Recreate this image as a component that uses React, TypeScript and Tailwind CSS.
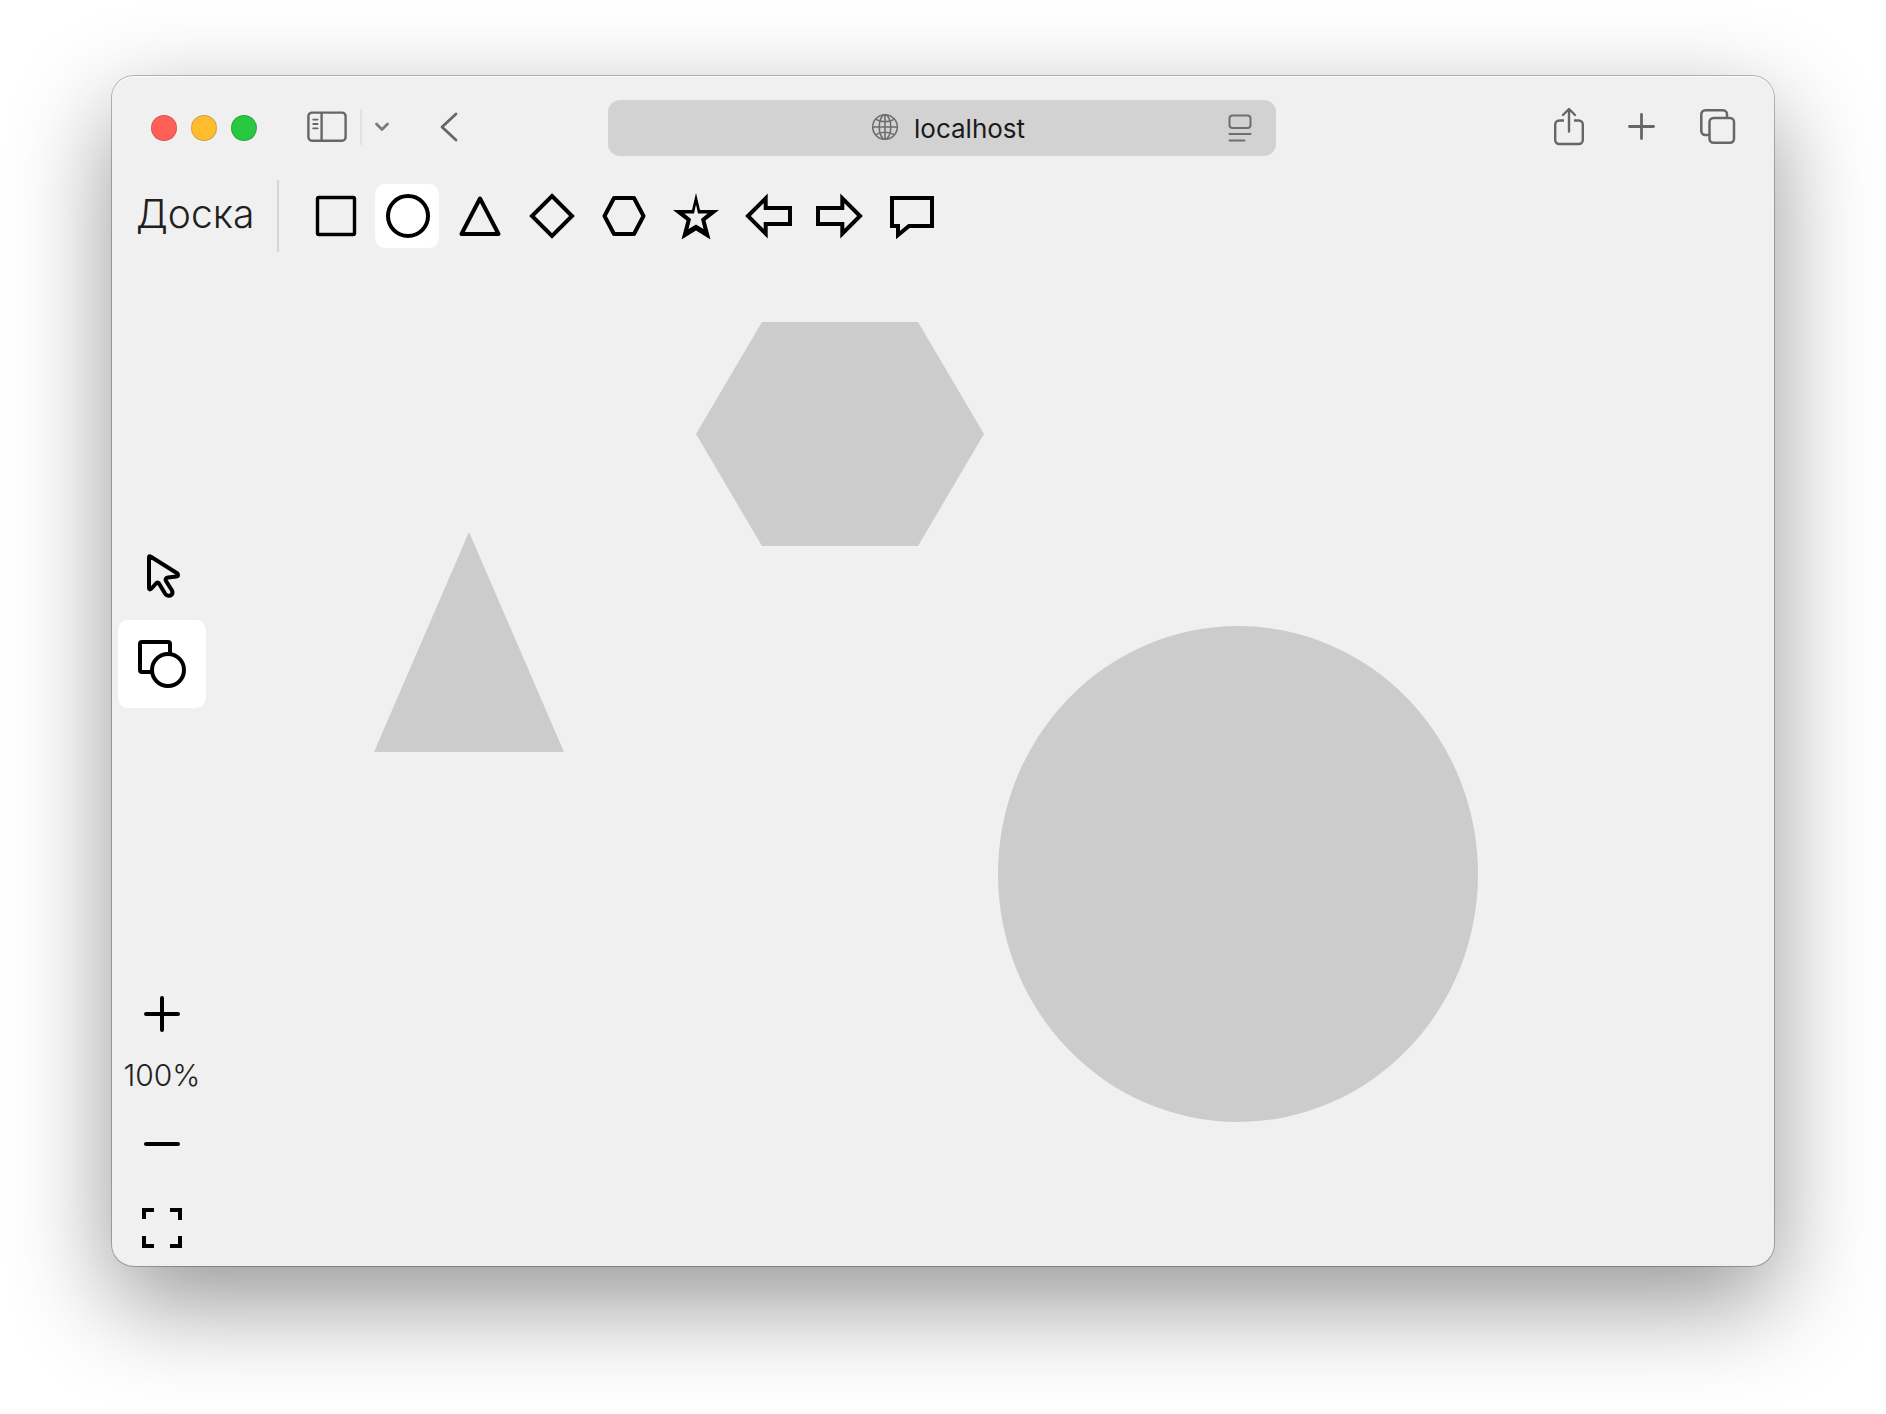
import type { ReactNode } from "react";

const shapeTools: { name: string; icon: ReactNode }[] = [
  { name: "Квадрат", icon: <rect x="14.5" y="13.5" width="37" height="37" rx="1.5" strokeWidth="3.4" /> },
  { name: "Круг", icon: <circle cx="33" cy="32" r="20" /> },
  { name: "Треугольник", icon: <path d="M33 14.5 51.5 50h-37Z" strokeLinejoin="round" /> },
  { name: "Ромб", icon: <path d="M33 12 53 32 33 52 13 32Z" /> },
  { name: "Шестиугольник", icon: <path d="M13.5 32 23 14h20L52.5 32 43 50H23Z" strokeLinejoin="round" /> },
  {
    name: "Звезда",
    icon: (
      <path
        stroke="none"
        fill="#000"
        fillRule="evenodd"
        d="M33 9 37 26H56L42.500 36.500 47.500 55.500 33 46.500 18.500 55.500 23.500 36.500 10 26H29ZM33 20.500 31 29.500H21.500L28 35 25.500 45 33 40.500 40.500 45 38 35 44.500 29.500H35Z"
      />
    ),
  },
  { name: "Стрелка влево", icon: <path d="M13 32 30.7 14.3V24H55v16H30.7v9.7Z" /> },
  { name: "Стрелка вправо", icon: <path d="M53 32 35.3 14.3V24H11v16h24.3v9.7Z" /> },
  { name: "Выноска", icon: <path d="M13 14h40v28H30L19 51v-9h-6Z" /> },
];

function BrowserBar() {
  return (
    <header className="grid h-[102px] grid-cols-[1fr_670px_1fr] items-center text-[#666]">
      <div className="flex items-center pl-10">
        <div className="flex gap-4 pt-0.5">
          <button aria-label="Закрыть" className="size-6 rounded-full bg-[#ff5f57] ring-1 ring-[#d8574f]" />
          <button aria-label="Свернуть" className="size-6 rounded-full bg-[#febc2e] ring-1 ring-[#d3a13a]" />
          <button aria-label="Развернуть" className="size-6 rounded-full bg-[#28c840] ring-1 ring-[#2ba33c]" />
        </div>
        <button aria-label="Боковая панель" className="ml-[51px]">
          <svg className="h-8 w-10" viewBox="0 0 40 32" fill="none" stroke="currentColor" strokeWidth="2.4" strokeLinecap="round">
            <rect x="1.4" y="1.6" width="37.2" height="28.2" rx="3.6" />
            <path d="M14.6 2v27.6" />
            <path d="M6.2 8.6h4.4M6.2 13h4.4M6.2 17.4h4.4" strokeWidth="1.8" />
          </svg>
        </button>
        <div className="ml-[13px] h-9 w-0.5 bg-[#e1e1e1]" />
        <button aria-label="Группы вкладок" className="ml-3">
          <svg className="h-3 w-4" viewBox="0 0 16 12" fill="none" stroke="#7b7b7b" strokeWidth="2.8" strokeLinecap="round" strokeLinejoin="round">
            <path d="m2.500 3 5.500 5.500L13.500 3" />
          </svg>
        </button>
        <button aria-label="Назад" className="ml-[50px]">
          <svg className="h-8 w-5" viewBox="0 0 20 32" fill="none" stroke="currentColor" strokeWidth="2.8" strokeLinecap="round" strokeLinejoin="round">
            <path d="M16 3 2 16l14 13" />
          </svg>
        </button>
      </div>

      <div className="mt-0.5 mr-0.5 flex h-14 items-center rounded-xl bg-[#d2d2d2] pr-6 pl-[263px] text-[#1a1a1a]">
        <svg className="size-[28px] shrink-0 text-[#6e6e6e]" viewBox="0 0 28 28" fill="none" stroke="currentColor" strokeWidth="1.6">
          <circle cx="14" cy="13" r="12.3" />
          <ellipse cx="14" cy="13" rx="5.8" ry="12.3" />
          <path d="M14 .7v24.6M1.7 13h24.6M4.5 5.2c5 3.4 14 3.400 19 0M4.5 20.8c5-3.4 14-3.400 19 0" />
        </svg>
        <input
          aria-label="Адрес"
          defaultValue="localhost"
          className="mt-0.5 ml-[15px] min-w-0 flex-1 bg-transparent font-[Inter,sans-serif] text-[26px] leading-8 outline-none"
        />
        <button aria-label="Режим чтения" className="text-[#6e6e6e]">
          <svg className="h-7 w-6" viewBox="0 0 24 28" fill="none" stroke="currentColor" strokeWidth="2" strokeLinecap="round">
            <rect x="1.5" y="1.5" width="21" height="12.5" rx="3" />
            <path d="M1.5 20h21M1.5 26.5h15" />
          </svg>
        </button>
      </div>

      <div className="flex items-center justify-end gap-11 pr-[38px]">
        <button aria-label="Поделиться">
          <svg className="h-10 w-[30px]" viewBox="0 0 30 40" fill="none" stroke="currentColor" strokeWidth="2.4" strokeLinecap="round" strokeLinejoin="round">
            <path d="M10 13.500H5.200A4 4 0 0 0 1.200 17.500V33a4 4 0 0 0 4 4h19.600a4 4 0 0 0 4-4V17.500a4 4 0 0 0-4-4H20" strokeLinecap="butt" />
            <path d="M15 24.500V2.500M9 8l6-6 6 6" />
          </svg>
        </button>
        <button aria-label="Новая вкладка">
          <svg className="size-[28px]" viewBox="0 0 28 28" fill="none" stroke="currentColor" strokeWidth="2.8" strokeLinecap="round">
            <path d="M13.5 1.5v24M1.5 13.5h24" />
          </svg>
        </button>
        <button aria-label="Обзор вкладок">
          <svg className="size-9" viewBox="0 0 36 36" fill="none" stroke="currentColor" strokeWidth="2.5">
            <path d="M27 9V5.300a4 4 0 0 0-4-4H5.300a4 4 0 0 0-4 4V22a4 4 0 0 0 4 4H9.500" />
            <rect x="9.5" y="9" width="24.5" height="24.8" rx="4" />
          </svg>
        </button>
      </div>
    </header>
  );
}

function Toolbar() {
  return (
    <div className="flex h-[76px] shrink-0 items-center">
      <h1 className="w-[165px] pb-1 pl-6 font-[Inter,sans-serif] text-[39px] leading-[72px] font-light text-[#1f1f1f]">Доска</h1>
      <div className="h-[72px] w-0.5 bg-[#d6d6d6]" />
      <div className="flex gap-2 pl-6">
        {shapeTools.map((tool, i) => (
          <button key={tool.name} aria-label={tool.name} className={i === 1 ? "size-16 rounded-[10px] bg-white" : "size-16 rounded-[10px]"}>
            <svg className="size-16" viewBox="0 0 64 64" fill="none" stroke="#000" strokeWidth="4" strokeMiterlimit="10">
              {tool.icon}
            </svg>
          </button>
        ))}
      </div>
    </div>
  );
}

function Sidebar() {
  return (
    <aside className="flex w-[94px] flex-col items-center pl-1.5">
      <div className="flex flex-1 flex-col justify-end pb-[266px]">
        <button aria-label="Выделение" className="size-[88px]">
          <svg className="size-[88px]" viewBox="0 0 88 88" fill="none" stroke="#000" strokeWidth="4" strokeLinejoin="round">
            <path d="M32.500 24.500 59.500 41.500Q61 44 58.500 44.500L50 45.500Q46.500 46 48 49L54 58.500Q55.500 62 52.500 63.500 49 64.500 47 61.500L41 51.500Q39.500 49.500 38 51.500L33.500 56.500Q31 58.500 31 56V25.500Q31 23.500 32.500 24.500Z" />
          </svg>
        </button>
        <button aria-label="Фигуры" className="size-[88px] rounded-[10px] bg-white">
          <svg className="size-[88px]" viewBox="0 0 88 88" fill="none" stroke="#000" strokeWidth="4">
            <path d="M52 33V24a2 2 0 0 0-2-2H24a2 2 0 0 0-2 2V50a2 2 0 0 0 2 2h9" />
            <circle cx="50" cy="50" r="16" />
          </svg>
        </button>
      </div>
      <button aria-label="Увеличить" className="h-20 w-[88px]">
        <svg className="mx-auto size-10" viewBox="0 0 40 40" fill="none" stroke="#000" strokeWidth="4" strokeLinecap="round">
          <path d="M20 4v32M4 20h32" />
        </svg>
      </button>
      <output className="font-[Inter,sans-serif] text-[30px] leading-[42px] font-light text-[#1f1f1f]">100%</output>
      <button aria-label="Уменьшить" className="h-24 w-[88px]">
        <svg className="mx-auto size-10" viewBox="0 0 40 40" fill="none" stroke="#000" strokeWidth="4" strokeLinecap="round">
          <path d="M4 20h32" />
        </svg>
      </button>
      <button aria-label="Во весь экран" className="mb-0.5 h-[72px] w-[88px]">
        <svg className="mx-auto size-10" viewBox="0 0 40 40" fill="none" stroke="#000" strokeWidth="4">
          <path d="M12 2H2v9M28 2h10v10M38 28v10H28M12 38H2V28" />
        </svg>
      </button>
    </aside>
  );
}

function Board() {
  return (
    <main className="relative flex-1">
      <svg className="absolute top-[68px] left-[490px] h-[224px] w-[288px]" viewBox="0 0 288 224" fill="#ccc">
        <path d="M66 0h156l66 112-66 112H66L0 112Z" />
      </svg>
      <svg className="absolute top-[278px] left-[168px] h-[220px] w-[190px]" viewBox="0 0 190 220" fill="#ccc">
        <path d="M95 0 190 220H0Z" />
      </svg>
      <div className="absolute top-[372px] left-[792px] h-[496px] w-[480px] rounded-[50%] bg-[#ccc]" />
    </main>
  );
}

export default function App() {
  return (
    <div className="flex min-h-screen bg-white px-28 pt-[76px] pb-[148px]">
      <div className="flex flex-1 flex-col overflow-hidden rounded-[22px] bg-[#f0f0f0] shadow-[inset_0_1px_1px_rgba(255,255,255,0.8),0_0_0_1px_rgba(0,0,0,0.25),0_36px_100px_rgba(0,0,0,0.42)]">
        <BrowserBar />
        <Toolbar />
        <div className="flex flex-1">
          <Sidebar />
          <Board />
        </div>
      </div>
    </div>
  );
}
